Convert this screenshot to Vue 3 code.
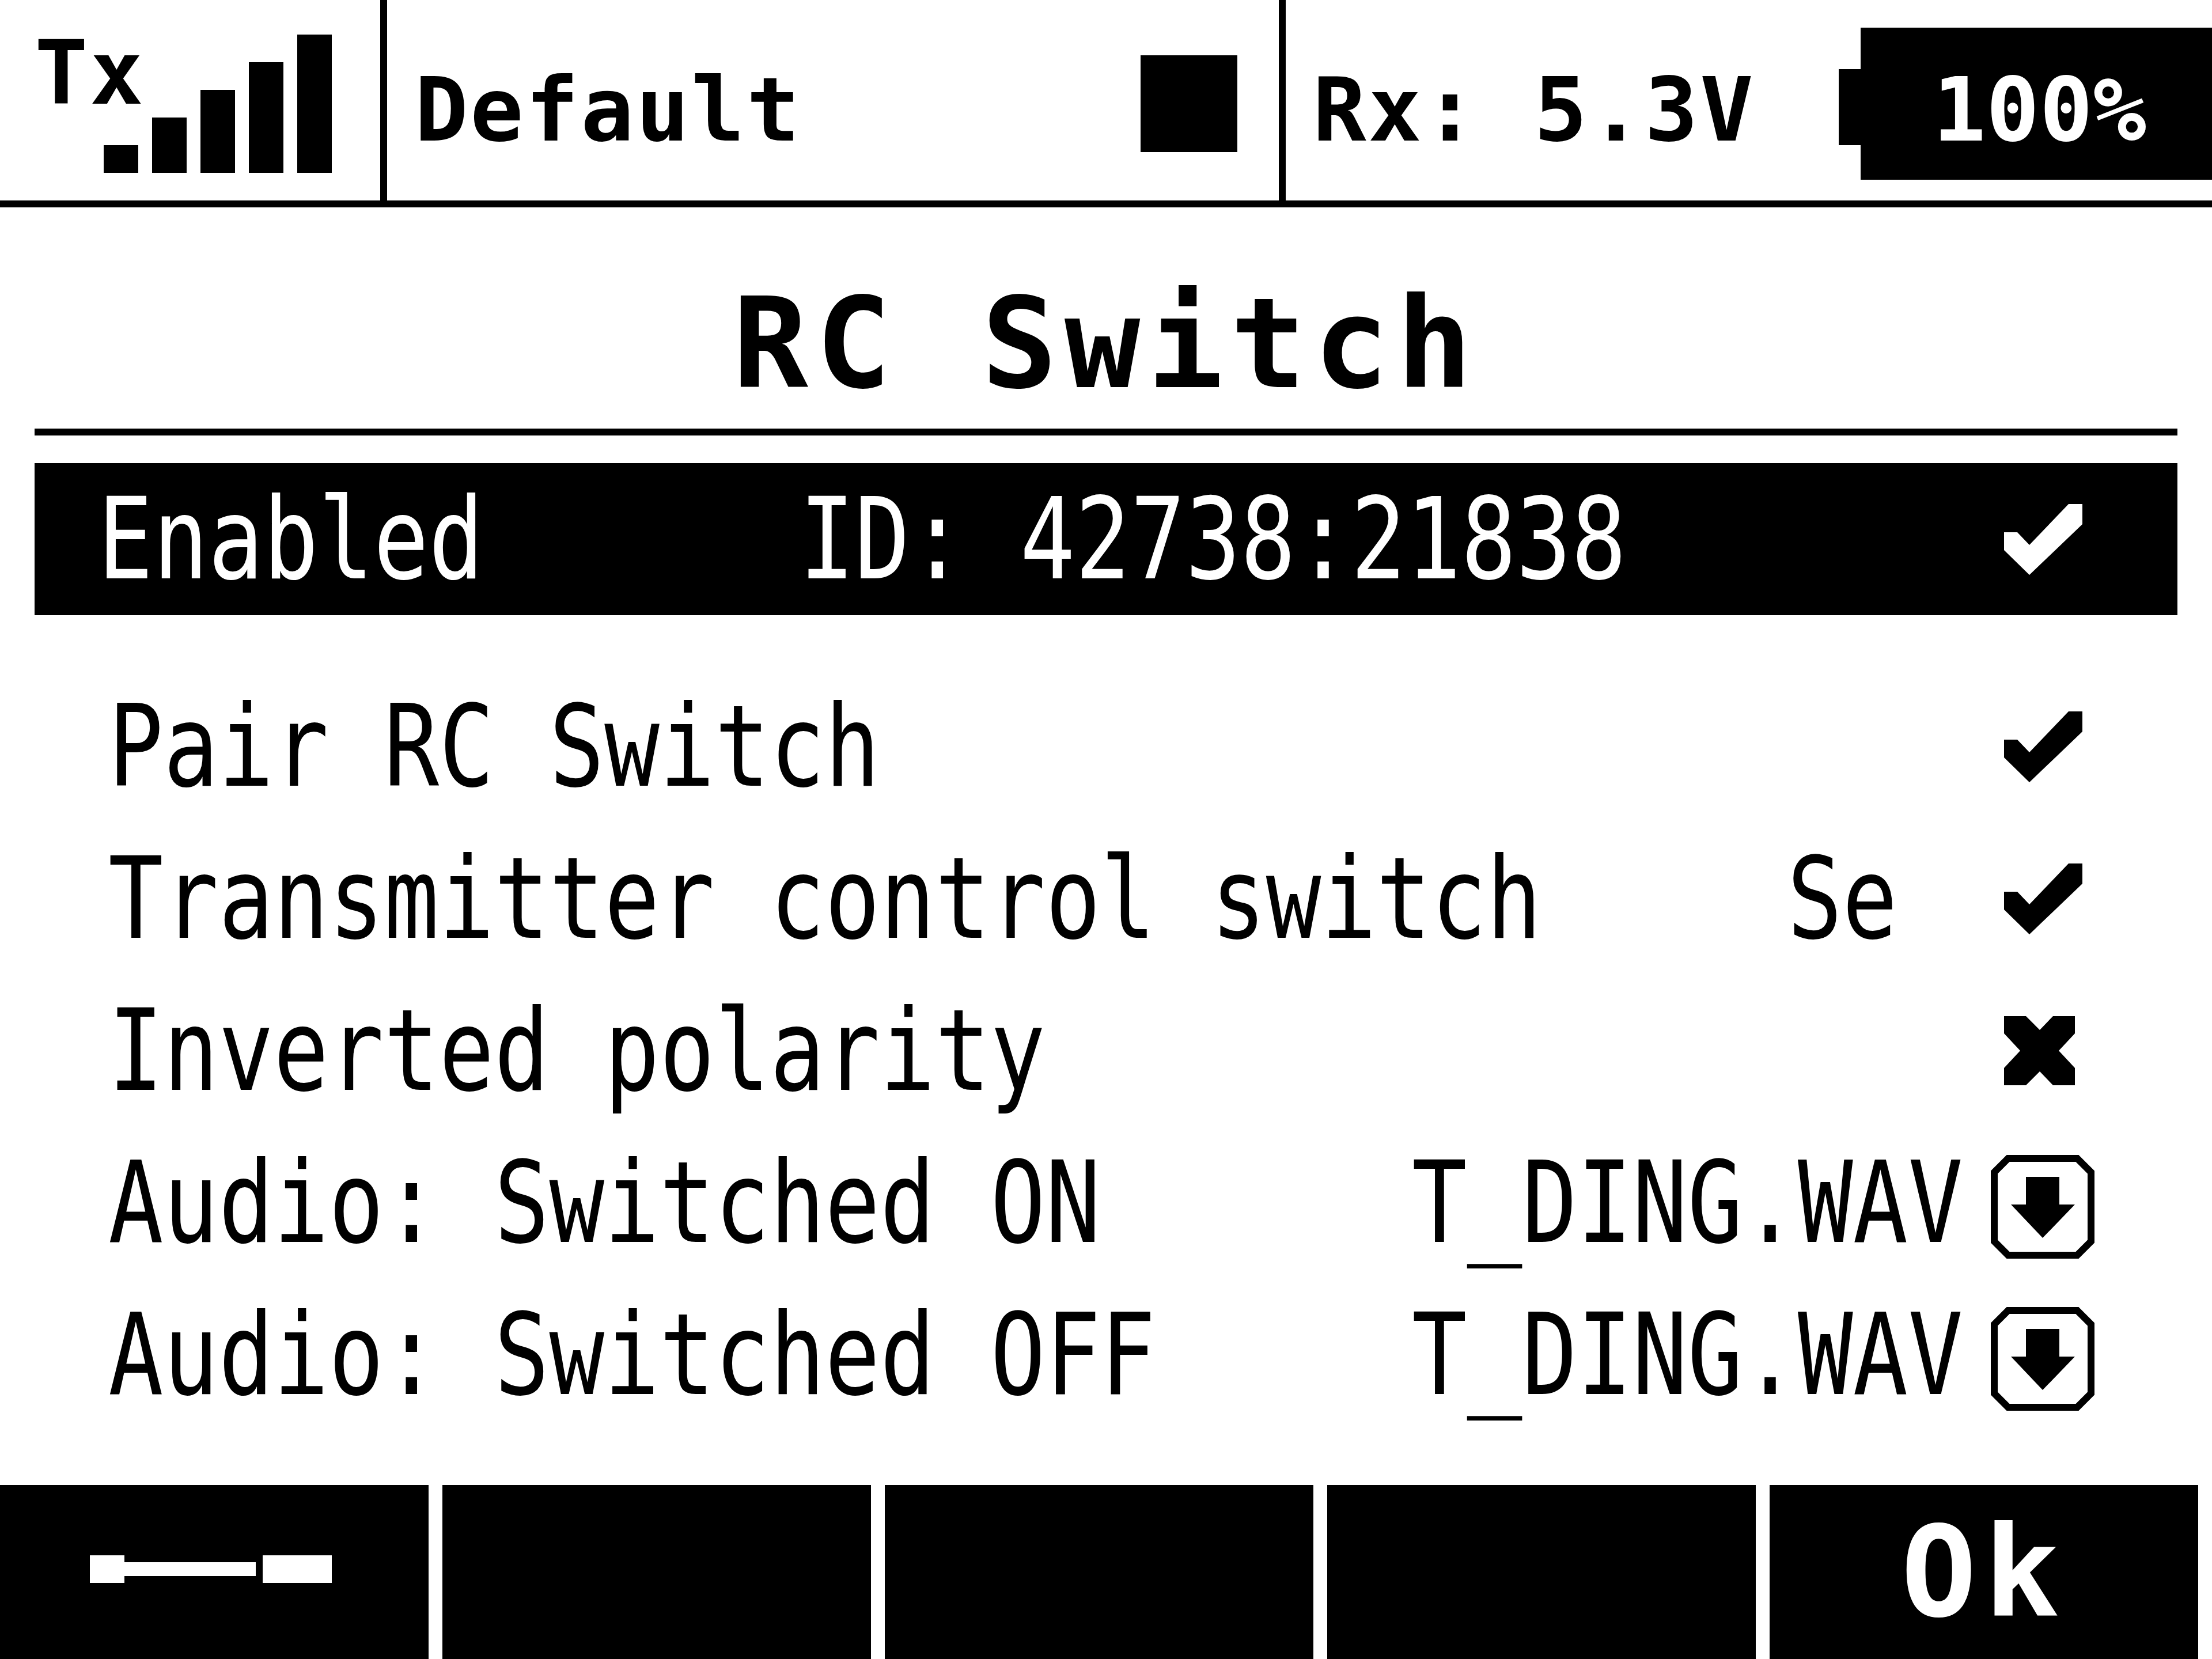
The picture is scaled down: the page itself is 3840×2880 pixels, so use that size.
<template>
  <div class="screen">
    <header class="status">
      <div class="tx-cell">
        <span class="bold tx">Tx</span>
        <div class="bars">
          <i v-for="h in barHeights" :key="h" class="bar" :style="{ height: h + 'px' }"></i>
        </div>
      </div>
      <div class="model-cell">
        <span class="bold">Default</span>
        <i class="square"></i>
      </div>
      <div class="rx-cell">
        <span class="bold">Rx: 5.3V</span>
        <div class="battery">
          <i class="tip"></i>
          <div class="cell"><span class="bold">100%</span></div>
        </div>
      </div>
    </header>

    <main class="content">
      <h1 class="title">RC Switch</h1>
      <div class="row selected">
        <span class="txt first">Enabled</span>
        <span class="txt">ID: 42738:21838</span>
        <span class="slot">
          <svg class="check" viewBox="0 0 136 123"><polygon points="0,49 23,49 44,71 112,0 136,0 136,35 44,123 0,80" /></svg>
        </span>
      </div>
      <div class="list">
        <div v-for="row in rows" :key="row.label" class="row">
          <span class="txt label">{{ row.label }}</span>
          <span v-if="row.value" class="txt value" :class="row.valueClass">{{ row.value }}</span>
          <span class="slot">
            <svg v-if="row.icon === 'check'" class="check" viewBox="0 0 136 123"><polygon points="0,49 23,49 44,71 112,0 136,0 136,35 44,123 0,80" /></svg>
            <svg v-else-if="row.icon === 'cross'" class="cross" viewBox="0 0 123 120"><polygon points="0,0 38,0 62,24 85,0 123,0 123,30 95,60 123,90 123,120 85,120 62,96 38,120 0,120 0,90 28,60 0,30" /></svg>
            <svg v-else class="down" viewBox="0 0 180 180">
              <polygon class="frame" points="30,6 150,6 174,30 174,150 150,174 30,174 6,150 6,30" />
              <polygon points="61,38 119,38 119,86 146,86 90,144 35,86 61,86" />
            </svg>
          </span>
        </div>
      </div>
    </main>

    <footer class="keys">
      <div class="key">
        <svg class="dial" viewBox="0 0 420 48">
          <rect x="0" y="0" width="60" height="48" />
          <rect x="60" y="12" width="228" height="24" />
          <rect x="300" y="0" width="120" height="48" />
        </svg>
      </div>
      <div class="key"></div>
      <div class="key"></div>
      <div class="key"></div>
      <div class="key ok">Ok</div>
    </footer>
  </div>
</template>

<script setup>
const barHeights = [48, 96, 144, 192, 240]

const rows = [
  { label: 'Pair RC Switch', icon: 'check' },
  { label: 'Transmitter control switch', value: 'Se', valueClass: 'short', icon: 'check' },
  { label: 'Inverted polarity', icon: 'cross' },
  { label: 'Audio: Switched ON', value: 'T_DING.WAV', icon: 'down' },
  { label: 'Audio: Switched OFF', value: 'T_DING.WAV', icon: 'down' }
]
</script>

<style>
html,
body {
  margin: 0;
  background: #fff;
}
</style>

<style scoped>
.screen {
  width: 3840px;
  height: 2880px;
  background: #fff;
  color: #000;
  display: flex;
  flex-direction: column;
  overflow: hidden;
  font-family: "DejaVu Sans Mono", monospace;
}

.bold {
  font-weight: 700;
  font-size: 154px;
  line-height: 154px;
  letter-spacing: 3.3px;
  white-space: pre;
}

.status {
  height: 348px;
  display: flex;
  border-bottom: 12px solid #000;
  flex: none;
}

.tx-cell {
  width: 516px;
  height: 240px;
  border-right: 12px solid #000;
  display: grid;
  padding: 60px 84px 48px 60px;
}

.tx,
.bars {
  grid-area: 1 / 1;
}

.tx {
  align-self: start;
  margin-top: -10px;
}

.bars {
  display: flex;
  align-items: flex-end;
  justify-content: flex-end;
  gap: 24px;
}

.bar {
  width: 60px;
  background: #000;
}

.model-cell {
  width: 1560px;
  border-right: 12px solid #000;
  display: flex;
  align-items: center;
  padding: 0 72px 0 48px;
  box-sizing: border-box;
}

.model-cell .bold {
  margin-top: 34px;
}

.square {
  width: 168px;
  height: 168px;
  background: #000;
  margin-left: auto;
  margin-top: 12px;
}

.rx-cell {
  flex: 1;
  display: flex;
  align-items: center;
  padding-left: 47px;
}

.rx-cell > .bold {
  margin-top: 34px;
}

.battery {
  margin-left: auto;
  margin-top: 12px;
  display: flex;
  align-items: center;
}

.tip {
  width: 38px;
  height: 132px;
  background: #000;
  margin-top: 12px;
}

.cell {
  width: 610px;
  height: 264px;
  background: #000;
  color: #fff;
  display: flex;
  align-items: center;
  padding-left: 125px;
  box-sizing: border-box;
}

.cell .bold {
  margin-top: 22px;
  letter-spacing: 0;
}

.content {
  flex: 1;
  padding: 0 60px;
  display: flex;
  flex-direction: column;
}

.title {
  margin: 0;
  height: 296px;
  padding-top: 88px;
  border-bottom: 12px solid #000;
  display: flex;
  align-items: center;
  justify-content: center;
  font-size: 218px;
  font-weight: 700;
  letter-spacing: 12.8px;
  flex: none;
}

.row {
  height: 264px;
  display: flex;
  align-items: center;
  padding-left: 128px;
  flex: none;
}

.txt {
  display: inline-block;
  font-size: 196px;
  line-height: 264px;
  white-space: pre;
  transform: scaleX(0.811);
  transform-origin: left center;
}

/* box stays narrow so long labels don't push the value column around */
.label {
  flex: 1 1 0;
  width: 0;
}

.value {
  transform-origin: right center;
  margin-right: 48px;
}

.value.short {
  margin-right: 162px;
}

.selected {
  margin-top: 48px;
  background: #000;
  color: #fff;
  padding-left: 110px;
}

.first {
  width: 1218px;
}

.selected .slot {
  margin-left: auto;
}

.list {
  margin-top: 96px;
}

.slot {
  width: 184px;
  margin-right: 140px;
  display: flex;
  align-items: center;
  flex: none;
}

.check {
  width: 136px;
  height: 123px;
  margin-left: 23px;
  fill: currentColor;
}

.cross {
  width: 123px;
  height: 120px;
  margin-left: 23px;
}

.down {
  width: 180px;
  height: 180px;
  margin-top: 14px;
}

.frame {
  fill: none;
  stroke: #000;
  stroke-width: 12;
}

.keys {
  height: 302px;
  display: flex;
  gap: 24px;
  padding-right: 24px;
  flex: none;
}

.key {
  width: 744px;
  background: #000;
  color: #fff;
  display: flex;
  align-items: center;
}

.dial {
  width: 420px;
  height: 48px;
  margin-left: 156px;
  margin-top: -10px;
  fill: #fff;
}

.ok {
  justify-content: center;
  font-size: 218px;
  font-weight: 700;
  letter-spacing: 12.8px;
}
</style>
